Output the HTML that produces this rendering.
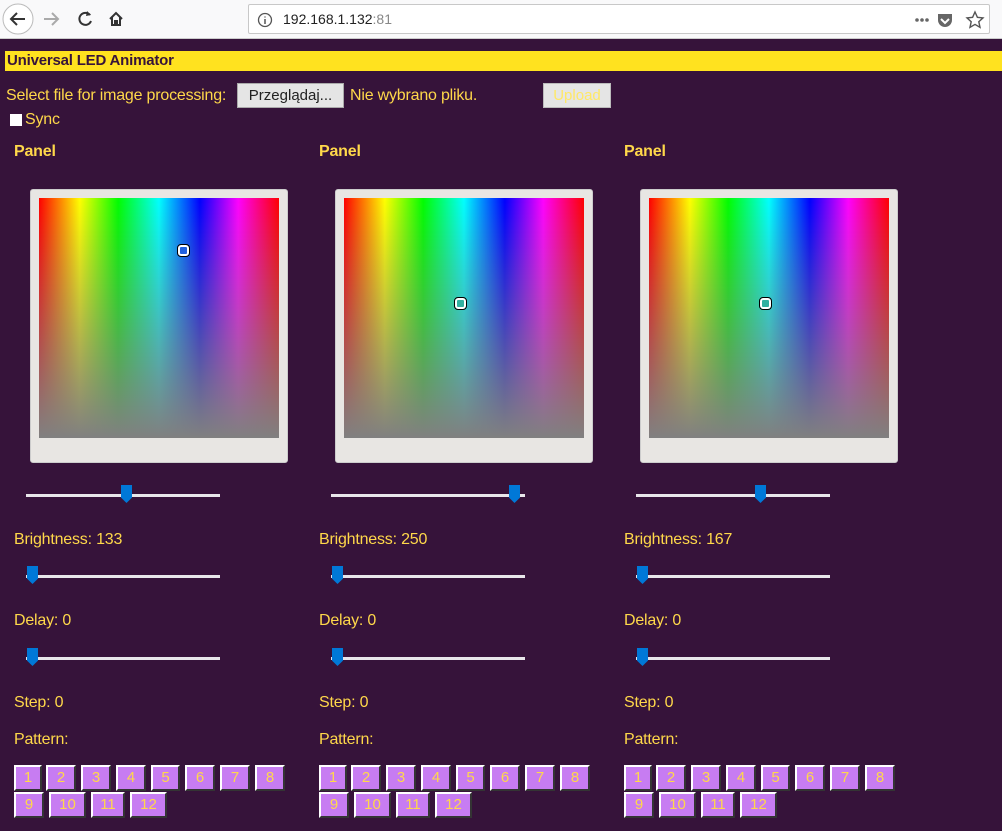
<!DOCTYPE html>
<html><head><meta charset="utf-8">
<style>
*{margin:0;padding:0;box-sizing:border-box}
body{width:1002px;height:831px;overflow:hidden;background:#36133a;font-family:"DejaVu Sans","Liberation Sans",sans-serif;position:relative}
.bar{position:absolute;left:0;top:0;width:1002px;height:39px;background:#f9f9fa;border-bottom:1px solid #ccc}
.url{position:absolute;left:248px;top:4px;width:742px;height:30px;background:#fff;border:1px solid #c8c8c8;border-radius:2px}
.t{position:absolute;color:#ffd84a;font-size:16px;white-space:nowrap;font-family:"Liberation Sans",sans-serif;letter-spacing:-0.2px}
.b{font-weight:bold}
.pick{position:absolute;width:258px;height:274px;background:#e8e6e3;border:1px solid #ccc;border-radius:3px}
.grad{position:absolute;left:8px;top:8px;width:240px;height:240px;background:linear-gradient(to bottom,rgba(128,128,128,0),#808080),linear-gradient(to right,#f00,#ff0 17%,#0f0 33%,#0ff 50%,#00f 67%,#f0f 83%,#f00)}
.dot{position:absolute;width:13px;height:13px;border:1px solid #000;border-radius:4px;box-shadow:inset 0 0 0 2px #fff}
.track{position:absolute;width:194px;height:3px;background:#e8e6ea}
.thumb{position:absolute;width:11px;height:18px;background:#0078d7;clip-path:polygon(0 0,100% 0,100% 70%,50% 100%,0 70%)}
.pb{position:absolute;height:26px;background:#c77cf2;border:2px outset #eee;border-color:#fff #888 #888 #fff;color:#ffd84a;font-family:"Comic Sans MS","Liberation Sans",sans-serif;font-size:15px;text-align:center;line-height:22px}
</style></head><body>
<div class="bar">
<svg style="position:absolute;left:0;top:0" width="140" height="38">
<circle cx="18" cy="19" r="15" fill="#fff" stroke="#bbb"/>
<path d="M25 19H11M17 13l-6 6 6 6" stroke="#333" stroke-width="2" fill="none"/>
<path d="M58 19H44M52 13l6 6-6 6" stroke="#aaa" stroke-width="2" fill="none"/>
<path d="M90 15a6 6 0 1 0 1 6" stroke="#333" stroke-width="2" fill="none"/><path d="M87 11l4 4-5 1z" fill="#333"/>
<path d="M110 19l6-6 6 6M112 17v8h8v-8M115 25v-4h2v4" stroke="#333" stroke-width="2" fill="none"/>
</svg>
<div class="url">
<svg style="position:absolute;left:8px;top:7px" width="16" height="16"><circle cx="8" cy="8" r="6.5" stroke="#555" fill="none" stroke-width="1.3"/><path d="M8 7v5M8 4.5v1" stroke="#555" stroke-width="1.5"/></svg>
<span style="position:absolute;left:34px;top:6px;font-size:14px;color:#222;font-family:'Liberation Sans',sans-serif">192.168.1.132<span style="color:#888">:81</span></span>
<svg style="position:absolute;left:660px;top:5px" width="80" height="20"><circle cx="8" cy="10" r="1.8" fill="#666"/><circle cx="13" cy="10" r="1.8" fill="#666"/><circle cx="18" cy="10" r="1.8" fill="#666"/>
<path d="M29 4h14v6a7 7 0 0 1-14 0z" fill="#666"/><path d="M32 9l4 4 4-4" stroke="#fff" stroke-width="2" fill="none"/>
<path d="M66 2l2.4 5.3 5.6.6-4.2 3.8 1.2 5.6-5-2.9-5 2.9 1.2-5.6-4.2-3.8 5.6-.6z" stroke="#555" stroke-width="1.4" fill="none"/></svg>
</div></div>

<div style="position:absolute;left:5px;top:51px;width:997px;height:20px;background:#ffe21f"></div>
<div class="t b" style="left:7px;top:52px;color:#36133a;font-size:15px">Universal LED Animator</div>
<div class="t" style="left:6px;top:87px">Select file for image processing:</div>
<div style="position:absolute;left:237px;top:83px;width:107px;height:25px;background:#e5e5e5;border:1px solid #aaa;font-size:15px;font-family:'Liberation Sans',sans-serif;color:#222;text-align:center;line-height:23px">Przeglądaj...</div>
<div class="t" style="left:350px;top:87px">Nie wybrano pliku.</div>
<div style="position:absolute;left:543px;top:83px;width:68px;height:25px;background:#e5e5e5;border:1px solid #bbb;font-size:15px;font-family:'Liberation Sans',sans-serif;color:#ffe866;text-align:center;line-height:23px">Upload</div>
<div style="position:absolute;left:10px;top:114px;width:12px;height:12px;background:#fff"></div>
<div class="t" style="left:25px;top:111px">Sync</div>

<!-- column 1 -->
<div class="t b" style="left:14px;top:143px">Panel</div>
<div class="pick" style="left:30px;top:189px"><div class="grad"></div><div class="dot" style="left:146px;top:54px;background:#2060e0"></div></div>
<div class="track" style="left:26px;top:494px"></div><div class="thumb" style="left:121px;top:485px"></div>
<div class="t" style="left:14px;top:531px">Brightness: 133</div>
<div class="track" style="left:26px;top:575px"></div><div class="thumb" style="left:27px;top:566px"></div>
<div class="t" style="left:14px;top:612px">Delay: 0</div>
<div class="track" style="left:26px;top:657px"></div><div class="thumb" style="left:27px;top:648px"></div>
<div class="t" style="left:14px;top:694px">Step: 0</div>
<div class="t" style="left:14px;top:731px">Pattern:</div>

<!-- column 2 -->
<div class="t b" style="left:319px;top:143px">Panel</div>
<div class="pick" style="left:335px;top:189px"><div class="grad"></div><div class="dot" style="left:118px;top:107px;background:#30b0a0"></div></div>
<div class="track" style="left:331px;top:494px"></div><div class="thumb" style="left:509px;top:485px"></div>
<div class="t" style="left:319px;top:531px">Brightness: 250</div>
<div class="track" style="left:331px;top:575px"></div><div class="thumb" style="left:332px;top:566px"></div>
<div class="t" style="left:319px;top:612px">Delay: 0</div>
<div class="track" style="left:331px;top:657px"></div><div class="thumb" style="left:332px;top:648px"></div>
<div class="t" style="left:319px;top:694px">Step: 0</div>
<div class="t" style="left:319px;top:731px">Pattern:</div>

<!-- column 3 -->
<div class="t b" style="left:624px;top:143px">Panel</div>
<div class="pick" style="left:640px;top:189px"><div class="grad"></div><div class="dot" style="left:118px;top:107px;background:#30b0a0"></div></div>
<div class="track" style="left:636px;top:494px"></div><div class="thumb" style="left:755px;top:485px"></div>
<div class="t" style="left:624px;top:531px">Brightness: 167</div>
<div class="track" style="left:636px;top:575px"></div><div class="thumb" style="left:637px;top:566px"></div>
<div class="t" style="left:624px;top:612px">Delay: 0</div>
<div class="track" style="left:636px;top:657px"></div><div class="thumb" style="left:637px;top:648px"></div>
<div class="t" style="left:624px;top:694px">Step: 0</div>
<div class="t" style="left:624px;top:731px">Pattern:</div>

<!-- pattern buttons col1 -->
<div class="pb" style="left:14px;top:765px;width:28px">1</div>
<div class="pb" style="left:46px;top:765px;width:30px">2</div>
<div class="pb" style="left:81px;top:765px;width:30px">3</div>
<div class="pb" style="left:116px;top:765px;width:30px">4</div>
<div class="pb" style="left:151px;top:765px;width:29px">5</div>
<div class="pb" style="left:185px;top:765px;width:30px">6</div>
<div class="pb" style="left:220px;top:765px;width:30px">7</div>
<div class="pb" style="left:255px;top:765px;width:30px">8</div>
<div class="pb" style="left:14px;top:792px;width:30px">9</div>
<div class="pb" style="left:49px;top:792px;width:37px">10</div>
<div class="pb" style="left:91px;top:792px;width:34px">11</div>
<div class="pb" style="left:130px;top:792px;width:37px">12</div>
<!-- col2 -->
<div class="pb" style="left:319px;top:765px;width:28px">1</div>
<div class="pb" style="left:351px;top:765px;width:30px">2</div>
<div class="pb" style="left:386px;top:765px;width:30px">3</div>
<div class="pb" style="left:421px;top:765px;width:30px">4</div>
<div class="pb" style="left:456px;top:765px;width:29px">5</div>
<div class="pb" style="left:490px;top:765px;width:30px">6</div>
<div class="pb" style="left:525px;top:765px;width:30px">7</div>
<div class="pb" style="left:560px;top:765px;width:30px">8</div>
<div class="pb" style="left:319px;top:792px;width:30px">9</div>
<div class="pb" style="left:354px;top:792px;width:37px">10</div>
<div class="pb" style="left:396px;top:792px;width:34px">11</div>
<div class="pb" style="left:435px;top:792px;width:37px">12</div>
<!-- col3 -->
<div class="pb" style="left:624px;top:765px;width:28px">1</div>
<div class="pb" style="left:656px;top:765px;width:30px">2</div>
<div class="pb" style="left:691px;top:765px;width:30px">3</div>
<div class="pb" style="left:726px;top:765px;width:30px">4</div>
<div class="pb" style="left:761px;top:765px;width:29px">5</div>
<div class="pb" style="left:795px;top:765px;width:30px">6</div>
<div class="pb" style="left:830px;top:765px;width:30px">7</div>
<div class="pb" style="left:865px;top:765px;width:30px">8</div>
<div class="pb" style="left:624px;top:792px;width:30px">9</div>
<div class="pb" style="left:659px;top:792px;width:37px">10</div>
<div class="pb" style="left:701px;top:792px;width:34px">11</div>
<div class="pb" style="left:740px;top:792px;width:37px">12</div>
</body></html>
